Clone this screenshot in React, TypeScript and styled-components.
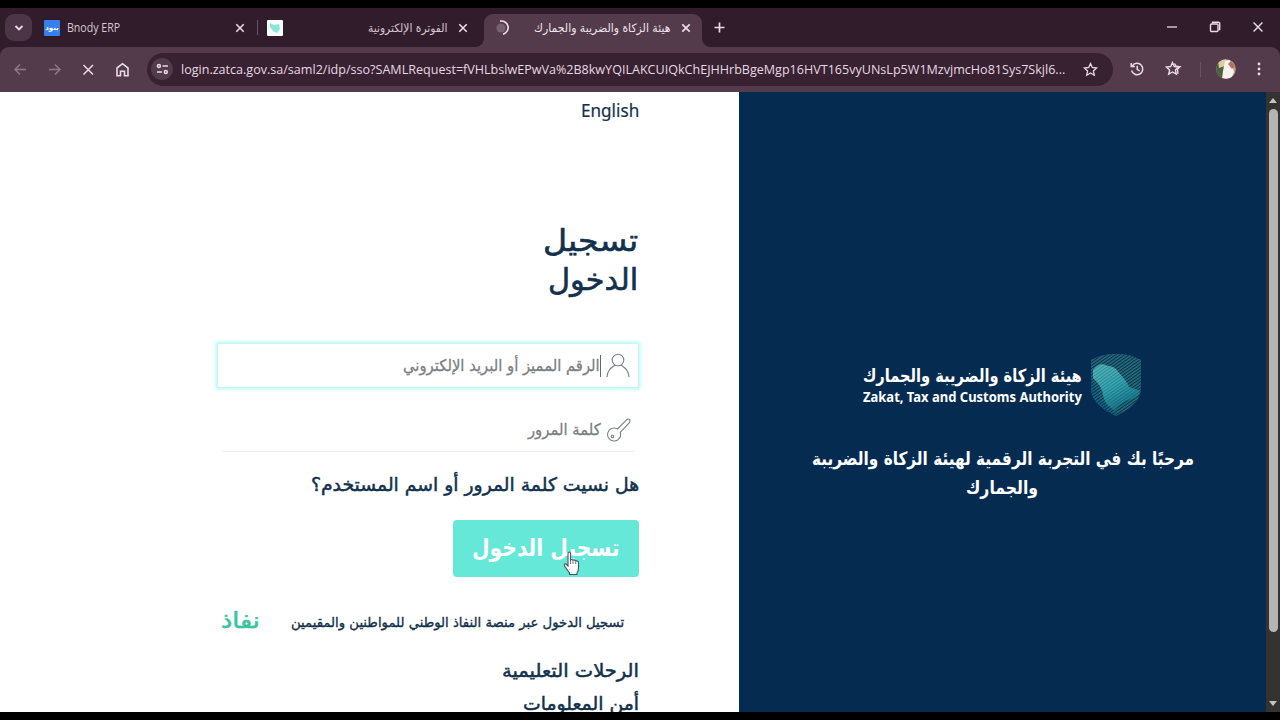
import React, { useLayoutEffect, useRef, useState } from 'react';
import styled, { createGlobalStyle, css } from 'styled-components';

const Global = createGlobalStyle`
  * { box-sizing: border-box; }
  body { margin: 0; background: #000; overflow: hidden; }
`;

const arabic = `'DejaVu Sans', 'Noto Sans', sans-serif`;
const latin = `'Open Sans', 'Noto Sans', sans-serif`;

/* ---------- text that fills a known measure ---------- */

type LineStyle = {
  $w: number; $h: number; $size: number; $color: string;
  $weight?: number; $stroke?: number; $rtl?: boolean; $font?: string;
};

const LineBox = styled.div<LineStyle>`
  flex: none;
  width: ${p => p.$w}px;
  height: ${p => p.$h}px;
  line-height: ${p => p.$h}px;
  font-family: ${p => p.$font ?? (p.$rtl ? arabic : latin)};
  font-size: ${p => p.$size}px;
  font-weight: ${p => p.$weight ?? 400};
  color: ${p => p.$color};
  direction: ${p => (p.$rtl ? 'rtl' : 'ltr')};
  white-space: nowrap;
  ${p => p.$stroke && css`-webkit-text-stroke: ${p.$stroke}px ${p.$color};`}
`;

const LineText = styled.span<{ $rtl?: boolean }>`
  display: inline-block;
  transform-origin: ${p => (p.$rtl ? 'right' : 'left')} center;
`;

type LineProps = {
  w: number; h: number; size: number; color: string;
  weight?: number; stroke?: number; rtl?: boolean; font?: string; children: string;
};

function Line({ w, h, size, color, weight, stroke, rtl, font, children }: LineProps) {
  const ref = useRef<HTMLSpanElement>(null);
  const [scale, setScale] = useState(1);
  useLayoutEffect(() => {
    if (ref.current) setScale(w / ref.current.offsetWidth);
  }, [w, size]);
  return (
    <LineBox $w={w} $h={h} $size={size} $color={color} $weight={weight} $stroke={stroke} $rtl={rtl} $font={font}>
      <LineText ref={ref} $rtl={rtl} style={{ transform: `scaleX(${scale})` }}>{children}</LineText>
    </LineBox>
  );
}

/* ---------- browser chrome ---------- */

const Screen = styled.div`
  width: 1280px;
  height: 720px;
  padding: 8px 0;
  background: #000;
  position: relative;
`;

const Window = styled.div`
  display: flex;
  flex-direction: column;
  height: 704px;
  overflow: hidden;
  background: #311c2c;
`;

const TabStrip = styled.div`
  display: flex;
  align-items: flex-end;
  height: 39px;
  padding-left: 5px;
`;

const TabSearch = styled.div`
  display: flex;
  align-items: center;
  justify-content: center;
  width: 27px;
  height: 27px;
  margin: 0 3px 6px 0;
  border-radius: 9px;
  background: #4c3546;
`;

const Tab = styled.div<{ $w: number; $end: number; $active?: boolean }>`
  position: relative;
  display: flex;
  align-items: center;
  width: ${p => p.$w}px;
  height: 33px;
  padding: 0 ${p => p.$end}px 5px 9px;
  border-radius: 9px 9px 0 0;
  background: ${p => (p.$active ? '#533b4c' : 'transparent')};
  ${p => p.$active && css`
    &::before, &::after {
      content: '';
      position: absolute;
      bottom: 0;
      width: 8px;
      height: 8px;
    }
    &::before { left: -8px; background: radial-gradient(circle at 0 0, transparent 7.5px, #533b4c 8px); }
    &::after { right: -8px; background: radial-gradient(circle at 100% 0, transparent 7.5px, #533b4c 8px); }
  `}
`;

const Favicon = styled.div<{ $bg: string }>`
  display: flex;
  align-items: center;
  justify-content: center;
  width: 16px;
  height: 16px;
  margin-right: 7px;
  border-radius: 1px;
  background: ${p => p.$bg};
  color: #fff;
  font: bold 7px ${arabic};
  svg { display: block; }
`;

const Grow = styled.div`flex: 1;`;

const Divider = styled.div<{ $h: number }>`
  width: 1px;
  height: ${p => p.$h}px;
  background: #6b5364;
`;

const TabDivider = styled(Divider)`margin: 0 0 12px 4px;`;

const CloseSlot = styled.div`
  display: flex;
  width: 10px;
  margin-left: 11px;
`;

const NewTab = styled.div`
  display: flex;
  margin: 0 0 14px 12px;
`;

const WindowControls = styled.div`
  display: flex;
  align-items: center;
  gap: 31px;
  height: 12px;
  margin: 0 16px 14px auto;
`;

const Toolbar = styled.div`
  display: flex;
  align-items: center;
  height: 45px;
  padding: 0 14px 1px 13px;
  border-radius: 9px 9px 0 0;
  background: #533b4c;
`;

const NavIcons = styled.div`
  display: flex;
  gap: 19px;
  width: 134px;
`;

const Omnibox = styled.div`
  display: flex;
  align-items: center;
  width: 966px;
  height: 33px;
  padding: 0 15px 0 4px;
  border-radius: 17px;
  background: #382131;
`;

const SiteInfo = styled.div`
  display: flex;
  align-items: center;
  justify-content: center;
  width: 22px;
  height: 22px;
  margin-right: 8px;
  border-radius: 50%;
  background: #523b4b;
`;

const Extras = styled.div`
  display: flex;
  flex: 1;
  align-items: center;
  padding-left: 16px;
`;

const Slot = styled.div<{ $gap: number }>`
  display: flex;
  margin-left: ${p => p.$gap}px;
`;

/* ---------- page ---------- */

const Page = styled.div`
  display: flex;
  height: 620px;
  overflow: hidden;
`;

const LoginPane = styled.main`
  width: 739px;
  padding: 6px 100px 0 217px;
  background: #fff;
`;

const FormColumn = styled.div`
  display: flex;
  flex-direction: column;
  align-items: flex-end;
  width: 422px;
`;

const Heading = styled.div`
  display: flex;
  flex-direction: column;
  align-items: flex-end;
  margin: 100px 1px 0 0;
`;

const Field = styled.div<{ $focus?: boolean }>`
  display: flex;
  align-items: center;
  justify-content: flex-end;
  gap: 5px;
  width: ${p => (p.$focus ? 422 : 413)}px;
  height: 45px;
  margin: ${p => (p.$focus ? '44px 0 0' : '19px 4px 0')};
  padding: ${p => (p.$focus ? '0 8px 0 0' : '2px 4px 0 0')};
  background: #fff;
  ${p => p.$focus
    ? css`border: 1px solid #c3f6f4; border-radius: 2px; box-shadow: 0 0 3px 1.5px #c8fbf9;`
    : css`border-bottom: 1px solid #f0f0f1;`}
`;

const InputText = styled.div<{ $caret?: boolean }>`
  display: flex;
  height: 22px;
  align-items: center;
  border-right: 1px solid ${p => (p.$caret ? '#666' : 'transparent')};
`;

const Forgot = styled.div`margin-top: 19px;`;

const LoginButton = styled.div`
  display: flex;
  align-items: center;
  justify-content: center;
  width: 186px;
  height: 57px;
  margin-top: 21px;
  padding-bottom: 1px;
  border-radius: 4px;
  background: #66e8d9;
`;

const NafathRow = styled.div`
  display: flex;
  justify-content: space-between;
  width: 403px;
  margin: 30px 15px 0 0;
`;

const Links = styled.div`
  display: flex;
  flex-direction: column;
  align-items: flex-end;
  margin-top: 17px;
`;

const BrandPane = styled.aside`
  display: flex;
  flex-direction: column;
  align-items: center;
  width: 527px;
  padding-top: 261px;
  background: #052c50;
`;

const Brand = styled.div`
  display: flex;
  gap: 8px;
  height: 64px;
`;

const BrandText = styled.div`
  display: flex;
  flex-direction: column;
  padding-top: 10px;
`;

const Welcome = styled.div`
  display: flex;
  flex-direction: column;
  align-items: center;
  margin-top: 27px;
`;

const Scrollbar = styled.div`
  display: flex;
  flex-direction: column;
  align-items: center;
  justify-content: space-between;
  width: 14px;
  padding: 6px 0;
  background: #34332f;
`;

const Thumb = styled.div`
  width: 9px;
  height: 523px;
  margin: 6px 0 auto;
  border-radius: 5px;
  background: #b4b4b4;
`;

const Pointer = styled.svg`
  position: absolute;
  left: 563px;
  top: 551px;
`;

/* ---------- icons ---------- */

const ink = '#e9dbe5';

const Close = ({ size = 10, width = 1.6 }: { size?: number; width?: number }) => (
  <svg width={size} height={size} viewBox="0 0 10 10" fill="none" stroke={ink} strokeWidth={width}>
    <path d="M1.3 1.3l7.400 7.400M8.700 1.300l-7.400 7.400" />
  </svg>
);

const Arrow = ({ forward }: { forward?: boolean }) => (
  <svg width="15" height="15" viewBox="0 0 15 15" fill="none" stroke="#8d7886" strokeWidth="1.5">
    {forward ? <path d="M2 7.5h11M8 2.5l5 5-5 5" /> : <path d="M13 7.5H2M7 2.5l-5 5 5 5" />}
  </svg>
);

const starPath = 'M7.5 1.5l1.8 4 4.3.5-3.2 2.9.9 4.3-3.8-2.2-3.8 2.2.9-4.3L1.4 6l4.3-.5z';

function Shield() {
  return (
    <svg width="52" height="64" viewBox="0 0 52 64">
      <defs>
        <clipPath id="shield">
          <path d="M1 7Q14 0 26 1Q39 0 51 7V36C50 49 39 56 26 63C13 56 2 49 1 36Z" />
        </clipPath>
        <linearGradient id="sea" x1="0" y1="0" x2="0.5" y2="1">
          <stop offset="0" stopColor="#5fc0c4" />
          <stop offset="0.55" stopColor="#38aeb4" />
          <stop offset="1" stopColor="#15768e" />
        </linearGradient>
        <linearGradient id="leaf" x1="0" y1="0" x2="1" y2="1">
          <stop offset="0" stopColor="#357f88" />
          <stop offset="1" stopColor="#2b8a80" />
        </linearGradient>
        <pattern id="hatch" width="2.6" height="2.6" patternUnits="userSpaceOnUse" patternTransform="rotate(-35)">
          <rect width="2.6" height="1.1" fill="#052c50" />
        </pattern>
        <pattern id="fineHatch" width="2.6" height="2.6" patternUnits="userSpaceOnUse" patternTransform="rotate(-35)">
          <rect width="2.6" height="0.9" fill="#0b5470" opacity="0.4" />
        </pattern>
      </defs>
      <g clipPath="url(#shield)">
        <rect width="52" height="64" fill="url(#leaf)" opacity="0.8" />
        <path d="M0 22L10 46L28 63L0 64Z" fill="#126a88" />
        <rect width="52" height="64" fill="url(#hatch)" />
        <path d="M3 17Q10 8 18 13Q25 13 29 20Q36 27 39 34L50 38Q48 45 41 46Q31 49 25 57Q15 53 13 42Q12 33 3 25Z" fill="url(#sea)" opacity="0.88" />
        <path d="M3 17Q10 8 18 13Q25 13 29 20Q36 27 39 34L50 38Q48 45 41 46Q31 49 25 57Q15 53 13 42Q12 33 3 25Z" fill="url(#fineHatch)" />
      </g>
    </svg>
  );
}

export default function App() {
  const navy = '#12314c';
  const grey = '#7b7f82';
  return (
    <>
      <Global />
      <Screen>
        <Window>
          <TabStrip>
            <TabSearch>
              <svg width="10" height="8" viewBox="0 0 10 8" fill="none" stroke={ink} strokeWidth="1.8"><path d="M1.5 2L5 5.5 8.5 2" /></svg>
            </TabSearch>
            <Tab $w={218} $end={8}>
              <Favicon $bg="#3680ed">بنود</Favicon>
              <Line w={53} h={20} size={12} color="#d6c7d1">Bnody ERP</Line>
              <Grow />
              <CloseSlot><Close /></CloseSlot>
            </Tab>
            <TabDivider $h={15} />
            <Tab $w={226} $end={16}>
              <Favicon $bg="#f4fffd">
                <svg width="12" height="12" viewBox="0 0 12 12"><path d="M1 1l4 2 5-1 1 5-3 4-4-2-3-4z" fill="#8de5d8" /></svg>
              </Favicon>
              <Grow />
              <Line w={80} h={20} size={11.5} color="#d6c7d1" rtl>الفوترة الإلكترونية</Line>
              <CloseSlot><Close /></CloseSlot>
            </Tab>
            <Tab $w={218} $end={11} $active>
              <svg width="16" height="16" viewBox="0 0 16 16" fill="none">
                <circle cx="8" cy="8" r="4.6" fill="#766071" />
                <path d="M7 1.2a6.6 6.6 0 0 1 3 12.9" stroke="#eadce5" strokeWidth="1.7" />
              </svg>
              <Grow />
              <Line w={136} h={20} size={11.5} color="#efe4ec" rtl>هيئة الزكاة والضريبة والجمارك</Line>
              <CloseSlot><Close width={1.8} /></CloseSlot>
            </Tab>
            <NewTab>
              <svg width="11" height="11" viewBox="0 0 11 11" stroke={ink} strokeWidth="1.7"><path d="M5.5 .5v10M.5 5.5h10" /></svg>
            </NewTab>
            <WindowControls>
              <svg width="12" height="12" viewBox="0 0 12 12" stroke={ink} strokeWidth="1.3"><path d="M1 6h10" /></svg>
              <svg width="12" height="12" viewBox="0 0 12 12" fill="none" stroke={ink} strokeWidth="1.4"><rect x="1.5" y="3" width="7.5" height="7.5" rx="1" /><path d="M3.5 2.6V1.3h5.9a1.3 1.3 0 0 1 1.3 1.3v6H9.5" /></svg>
              <Close size={12} width={1.2} />
            </WindowControls>
          </TabStrip>

          <Toolbar>
            <NavIcons>
              <Arrow />
              <Arrow forward />
              <svg width="15" height="15" viewBox="0 0 15 15" stroke={ink} strokeWidth="1.5"><path d="M2.500 3l9.500 9.500M12 3L2.500 12.500" /></svg>
              <svg width="15" height="15" viewBox="0 0 15 15" fill="none" stroke={ink} strokeWidth="1.6"><path d="M2 6l5.500-4.300L13 6v7.700H9.500V9.200h-4v4.500H2z" /></svg>
            </NavIcons>
            <Omnibox>
              <SiteInfo>
                <svg width="13" height="12" viewBox="0 0 13 12" fill="none" stroke={ink} strokeWidth="1.5">
                  <circle cx="2.900" cy="3" r="1.500" /><path d="M6.500 3h5.500M1 9h5" /><circle cx="9.800" cy="9" r="1.500" />
                </svg>
              </SiteInfo>
              <Line w={884} h={24} size={13} color="#e6d9e3">login.zatca.gov.sa/saml2/idp/sso?SAMLRequest=fVHLbslwEPwVa%2B8kwYQILAKCUIQkChEJHHrbBgeMgp16HVT165vyUNsLp5W1MzvjmcHo81Sys7Skjl6...</Line>
              <Grow />
              <svg width="15" height="15" viewBox="0 0 15 15" fill="none" stroke={ink} strokeWidth="1.3"><path d={starPath} /></svg>
            </Omnibox>
            <Extras>
              <svg width="16" height="16" viewBox="0 0 16 16" fill="none" stroke={ink} strokeWidth="1.5"><path d="M2.600 9.500a5.700 5.700 0 1 0 .8-4.700M2.200 2v3.600h3.600M8.200 4.800v3.500l2.500 1.700" /></svg>
              <Slot $gap={20}>
                <svg width="17" height="16" viewBox="0 0 17 16" fill="none" stroke={ink} strokeWidth="1.4"><path d={starPath} /><path d="M9.500 2.500l1.600 2.600 4 .6-2.700 2.600.6 4.500" /></svg>
              </Slot>
              <Slot $gap={18}><Divider $h={15} /></Slot>
              <Slot $gap={15}>
                <svg width="20" height="20" viewBox="0 0 20 20">
                  <defs><clipPath id="avatar"><circle cx="10" cy="10" r="9.800" /></clipPath></defs>
                  <g clipPath="url(#avatar)">
                    <rect width="20" height="20" fill="#b9a08f" />
                    <path d="M0 5h8v15H0z" fill="#4d6040" />
                    <path d="M2 0h8l-1 7-6 2z" fill="#d9cf9e" />
                    <path d="M9 2q6-3 7 4l2 7-3 7H6l1-8z" fill="#f5f1ef" />
                    <path d="M12 5l3-3 4 5-3 3z" fill="#b8705b" />
                  </g>
                </svg>
              </Slot>
              <Slot $gap={16}>
                <svg width="14" height="16" viewBox="0 0 14 16" fill={ink}><circle cx="7" cy="3" r="1.400" /><circle cx="7" cy="8" r="1.400" /><circle cx="7" cy="13" r="1.400" /></svg>
              </Slot>
            </Extras>
          </Toolbar>

          <Page>
            <LoginPane>
              <FormColumn>
                <Line w={58} h={24} size={18} color={navy} font="'Noto Sans', sans-serif" stroke={0.2}>English</Line>
                <Heading>
                  <Line w={95} h={38.5} size={30} color={navy} rtl stroke={0.6}>تسجيل</Line>
                  <Line w={90} h={38.5} size={30} color={navy} rtl stroke={0.6}>الدخول</Line>
                </Heading>
                <Field $focus>
                  <InputText $caret>
                    <Line w={197} h={22} size={16} color={grey} rtl stroke={0.3}>الرقم المميز أو البريد الإلكتروني</Line>
                  </InputText>
                  <svg width="24" height="25" viewBox="0 0 24 25" fill="none" stroke="#7b8286" strokeWidth="1.1"><circle cx="12" cy="7" r="5.800" /><path d="M1 24C1.500 17 5 15 8.800 12.300M15.200 12.300C19 15 22.500 17 23 24" /></svg>
                </Field>
                <Field>
                  <InputText>
                    <Line w={73} h={22} size={16} color={grey} rtl stroke={0.3}>كلمة المرور</Line>
                  </InputText>
                  <svg width="24" height="24" viewBox="0 0 24 24" fill="none" stroke="#7b8286" strokeWidth="1.100"><path d="M10.500 11L19.500 1.800Q21.500 .3 22.800 1.700Q23.300 3.500 22 5.200L13.200 14.300A6.500 6.500 0 1 1 10.500 11Z" /><circle cx="5.500" cy="18.500" r="1.300" /></svg>
                </Field>
                <Forgot>
                  <Line w={328} h={28} size={18.500} color={navy} rtl stroke={0.5}>هل نسيت كلمة المرور أو اسم المستخدم؟</Line>
                </Forgot>
                <LoginButton>
                  <Line w={148} h={56} size={24} color="#fff" weight={700} rtl>تسجيل الدخول</Line>
                </LoginButton>
                <NafathRow>
                  <Line w={39} h={28} size={22} color="#38c5a0" rtl stroke={0.6}>نفاذ</Line>
                  <Line w={333} h={30} size={13.500} color={navy} rtl stroke={0.35}>تسجيل الدخول عبر منصة النفاذ الوطني للمواطنين والمقيمين</Line>
                </NafathRow>
                <Links>
                  <Line w={137} h={33} size={18.500} color={navy} rtl stroke={0.5}>الرحلات التعليمية</Line>
                  <Line w={116} h={33} size={18.500} color={navy} rtl stroke={0.5}>أمن المعلومات</Line>
                </Links>
              </FormColumn>
            </LoginPane>
            <BrandPane>
              <Brand>
                <BrandText>
                  <Line w={219} h={25} size={18} color="#fff" rtl weight={700}>هيئة الزكاة والضريبة والجمارك</Line>
                  <Line w={219} h={18} size={14} color="#fff" weight={700} font="'Noto Sans', sans-serif">Zakat, Tax and Customs Authority</Line>
                </BrandText>
                <Shield />
              </Brand>
              <Welcome>
                <Line w={382} h={29} size={18.500} color="#fff" weight={700} rtl>مرحبًا بك في التجربة الرقمية لهيئة الزكاة والضريبة</Line>
                <Line w={72} h={29} size={18.500} color="#fff" weight={700} rtl>والجمارك</Line>
              </Welcome>
            </BrandPane>
            <Scrollbar>
              <svg width="8" height="5" viewBox="0 0 8 5" fill="#c4c4c4"><path d="M4 0l4 5H0z" /></svg>
              <Thumb />
              <svg width="8" height="5" viewBox="0 0 8 5" fill="#c4c4c4"><path d="M4 5L0 0h8z" /></svg>
            </Scrollbar>
          </Page>
        </Window>
        <Pointer width="18" height="25" viewBox="0 0 18 25" fill="#fff" stroke="#46555c" strokeWidth="1.100">
          <path d="M5 15V3Q5 1 6.300 1T7.600 3V9Q8.500 7.800 10 9.200Q11.500 8.400 12.600 10Q15.500 9.400 15.500 12V17Q15.500 20 14 22V23.500H6.500V22L1.500 15Q.8 12.500 3 13Z" />
          <path d="M10 9.500V13M12.700 10.500V13M7.600 9V13" fill="none" strokeWidth=".8" />
        </Pointer>
      </Screen>
    </>
  );
}
